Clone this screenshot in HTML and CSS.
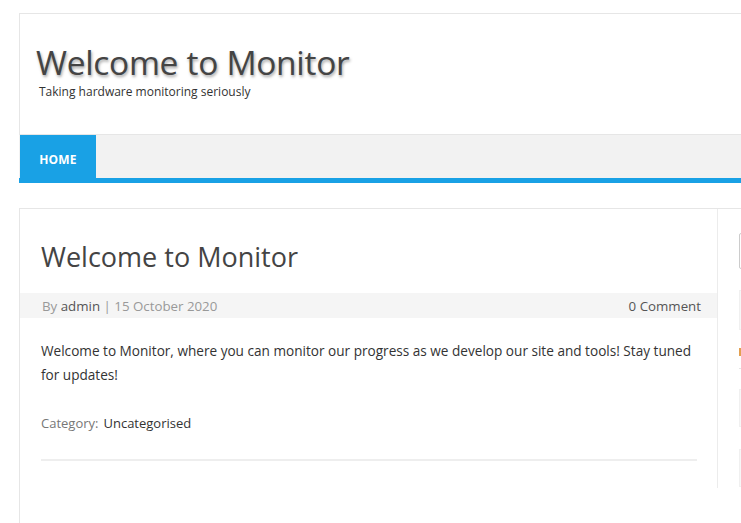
FILE: index.html
```html
<!DOCTYPE html>
<html>
<head>
<meta charset="utf-8">
<link rel="stylesheet" href="styles.css">
</head>
<body>
<div class="page">
  <header class="site-header">
    <div class="branding">
      <h1 class="site-title">Welcome to Monitor</h1>
      <p class="site-desc">Taking hardware monitoring seriously</p>
    </div>
    <nav class="nav">
      <a class="nav-item active">HOME</a>
    </nav>
  </header>
  <div class="content">
    <main class="main">
      <article class="post">
        <h2 class="post-title">Welcome to Monitor</h2>
        <div class="meta">
          <span class="meta-left">By <span class="author">admin</span> | 15 October 2020</span>
          <span class="comments">0 Comment</span>
        </div>
        <div class="entry">
          <p>Welcome to Monitor, where you can monitor our progress as we develop our site and tools! Stay tuned for updates!</p>
          <div class="cat"><span class="cat-label">Category:</span><span class="cat-link">Uncategorised</span></div>
          <hr class="sep">
        </div>
      </article>
    </main>
    <aside class="sidebar">
      <div class="search"></div>
      <div class="box box1"></div>
      <div class="widget-title"><span class="wt-mark"></span></div>
      <div class="box box2"></div>
      <div class="box box3"></div>
    </aside>
  </div>
</div>
</body>
</html>
```
FILE: styles.css
```css
html, body {
  margin: 0;
  padding: 0;
  background: #fff;
  overflow: hidden;
}
body {
  font-family: "Open Sans", "DejaVu Sans", sans-serif;
  color: #333;
  padding-top: 13px;
}
.page {
  margin-left: 19px;
  width: 1100px;
}
.site-header {
  border: 1px solid #e6e6e6;
  border-bottom: none;
}
.branding {
  height: 120px;
  padding: 0 0 0 16px;
  border-bottom: 1px solid #e6e6e6;
  display: flex;
  flex-direction: column;
  box-sizing: content-box;
}
.site-title {
  margin: 31px 0 0;
  font-size: 33.5px;
  font-weight: 400;
  line-height: 34px;
  color: #444;
  text-shadow: 1px 2px 3px rgba(0,0,0,0.35);
  letter-spacing: -0.3px;
}
.site-desc {
  margin: 6px 0 0 3px;
  font-size: 12px;
  line-height: 14px;
  color: #333;
}
.nav {
  display: flex;
  background: #f2f2f2;
  border-bottom: 5px solid #19a1e5;
  height: 43px;
  margin-left: -1px;
}
.nav-item {
  display: flex;
  align-items: center;
  width: 76px;
  box-sizing: border-box;
  margin-bottom: -5px;
  justify-content: center;
  background: #19a1e5;
  color: #fff;
  font-weight: 700;
  font-size: 12px;
  letter-spacing: 0.2px;
  margin-left: 1px;
}
.content {
  margin-top: 25px;
  display: flex;
  border-top: 1px solid #e6e6e6;
  border-left: 1px solid #e6e6e6;
  height: 330px;
}
.main {
  width: 697px;
  border-right: 1px solid #ececec;
  height: 279px;
}
.post-title {
  margin: 0;
  padding: 30px 0 0 21px;
  font-size: 27px;
  font-weight: 400;
  line-height: 36px;
  color: #444;
}
.meta {
  margin-top: 18px;
  background: #f5f5f5;
  height: 25px;
  display: flex;
  justify-content: space-between;
  align-items: center;
  padding: 0 16px 0 22px;
  font-size: 13.3px;
  color: #999;
}
.author, .comments { color: #555; }
.entry {
  padding: 0 20px 0 21px;
}
.entry p {
  margin: 21px 0 0;
  font-size: 13.6px;
  line-height: 24px;
  color: #333;
}
.cat {
  margin-top: 27px;
  font-size: 13px;
  line-height: 18px;
  display: flex;
  gap: 5px;
}
.cat-label { color: #777; }
.cat-link { color: #333; }
.sep {
  margin: 27px 0 0;
  border: none;
  border-top: 2px solid #eee;
}
.sidebar {
  padding-left: 21px;
  flex: 1;
}
.search {
  margin-top: 24px;
  height: 34px;
  border: 1px solid #ccc;
  border-radius: 2px;
}
.box {
  background: #f7f7f7;
  border: 1px solid #f0f0f0;
}
.box1 { margin-top: 21px; height: 38px; }
.widget-title {
  margin-top: 18px;
  height: 20px;
  border-bottom: 1px solid #e5e5e5;
}
.wt-mark {
  display: block;
  width: 3px;
  height: 8px;
  margin-top: 6px;
  background: #e3a050;
}
.box2 { margin-top: 20px; height: 36px; }
.box3 { margin-top: 22px; height: 36px; }
```
